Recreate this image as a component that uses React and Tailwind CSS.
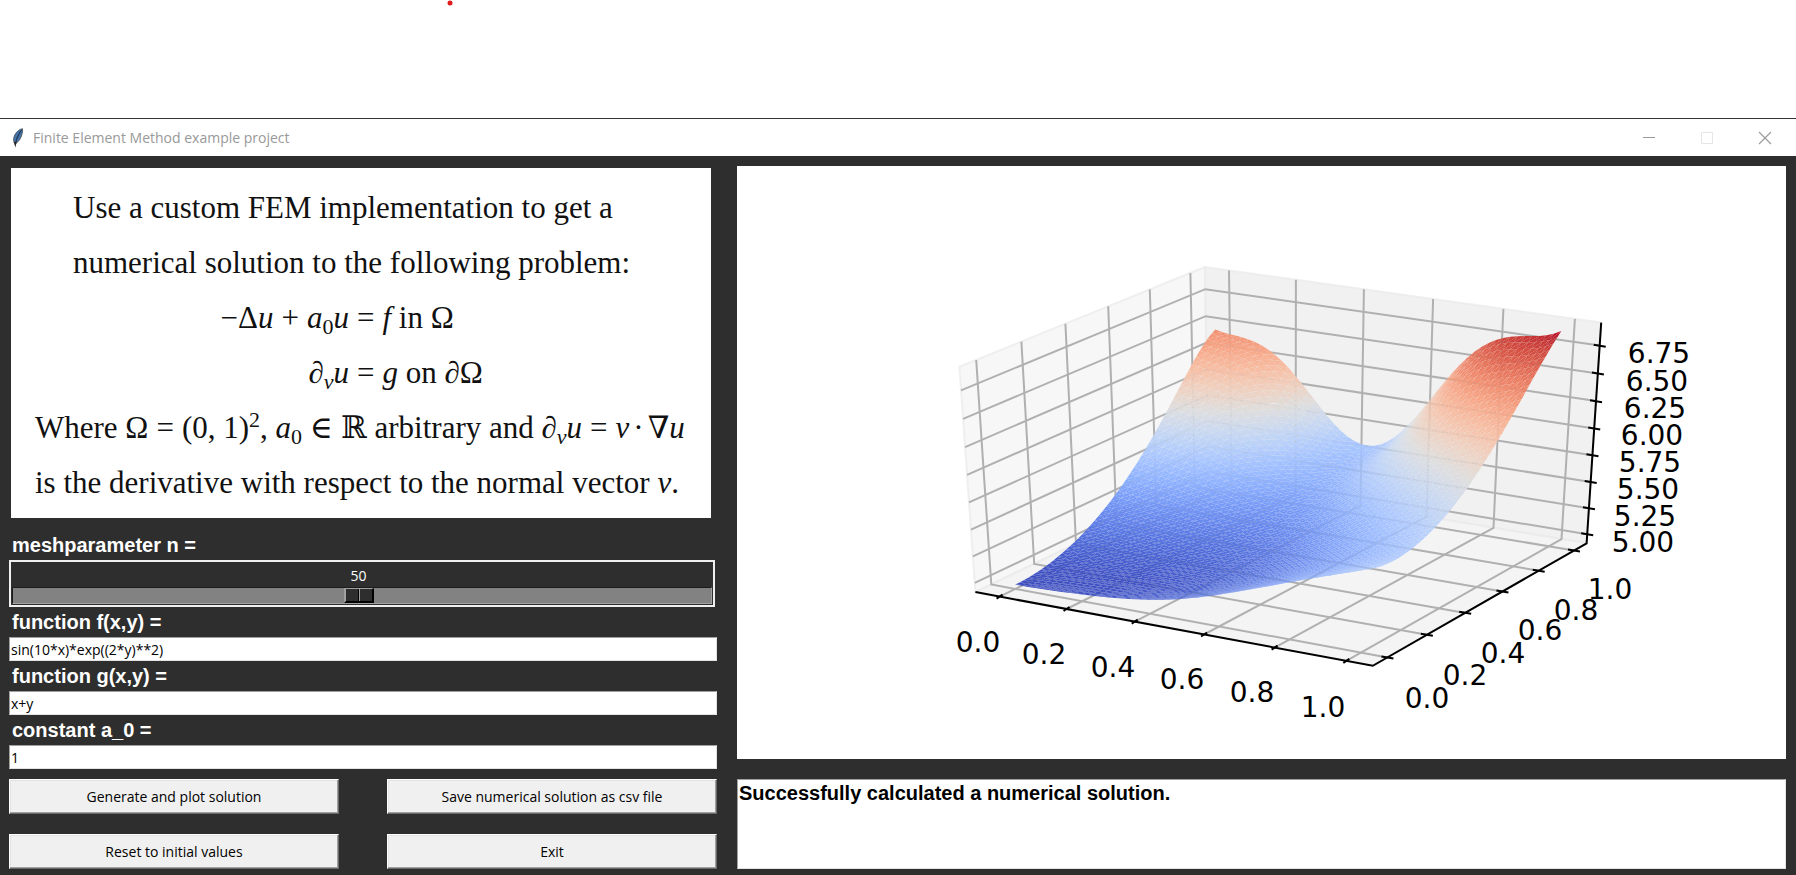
import React, { useMemo, useState } from "react";

/* ---------- finite difference solution of -Δu + a0·u = f, ∂νu = g ---------- */

const N = 50;
const M = N + 1;

function solve() {
  const h = 1 / N;
  const omega = 1.97;
  const u = new Float64Array(M * M).fill(5.5);
  for (let pass = 0; pass < 700; pass++) {
    for (let j = 0; j < M; j++) {
      for (let i = 0; i < M; i++) {
        const x = i * h;
        const y = j * h;
        const flux = 2 * h * (x + y);
        let s = h * h * Math.sin(10 * x) * Math.exp(4 * y * y);
        s += i > 0 ? u[j * M + i - 1] : u[j * M + 1] + flux;
        s += i < N ? u[j * M + i + 1] : u[j * M + N - 1] + flux;
        s += j > 0 ? u[(j - 1) * M + i] : u[M + i] + flux;
        s += j < N ? u[(j + 1) * M + i] : u[(N - 1) * M + i] + flux;
        const k = j * M + i;
        u[k] += omega * (s / (4 + h * h) - u[k]);
      }
    }
  }
  return u;
}

/* ---------- camera ---------- */

const CAM = [
  328.154603, 241.669837, -13.458977, 271.141199,
  44.556083, -77.862247, -117.960797, 305.866744,
  -0.04268, 0.070156, -0.024331,
];

function project(x, y, zData) {
  const z = zData - 6;
  const w = CAM[8] * x + CAM[9] * y + CAM[10] * z + 1;
  return [
    (CAM[0] * x + CAM[1] * y + CAM[2] * z + CAM[3]) / w,
    (CAM[4] * x + CAM[5] * y + CAM[6] * z + CAM[7]) / w,
  ];
}

const LO = -0.0729;
const HI = 1.0729;
const ZLO = 4.913;
const ZHI = 6.954;

const toPoints = (list) =>
  list.map((p) => project(...p).map((v) => v.toFixed(1)).join(",")).join(" ");

/* ---------- coolwarm colour map ---------- */

const COOLWARM = [
  [59, 76, 192], [68, 90, 204], [77, 104, 215], [87, 117, 225], [98, 130, 234],
  [108, 142, 241], [119, 154, 247], [130, 165, 251], [141, 176, 254], [152, 185, 255],
  [163, 194, 255], [174, 201, 253], [184, 208, 249], [194, 213, 244], [204, 217, 238],
  [213, 219, 230], [221, 221, 221], [229, 216, 209], [236, 211, 197], [241, 204, 185],
  [245, 196, 173], [247, 187, 160], [247, 177, 148], [247, 166, 135], [244, 154, 123],
  [241, 141, 111], [236, 127, 99], [229, 112, 88], [222, 96, 77], [213, 80, 66],
  [203, 62, 56], [192, 40, 47], [180, 4, 38],
];

function colour(t) {
  const p = Math.min(Math.max(t, 0), 1) * 32;
  const k = Math.min(Math.floor(p), 31);
  const [a, b] = [COOLWARM[k], COOLWARM[k + 1]];
  return `rgb(${a.map((v, i) => Math.round(v + (b[i] - v) * (p - k))).join(",")})`;
}

function buildTriangles() {
  const u = solve();
  const min = Math.min(...u);
  const max = Math.max(...u);
  const at = (i, j) => [i / N, j / N, u[j * M + i]];
  const out = [];
  const push = (...tri) => {
    const mean = (tri[0][2] + tri[1][2] + tri[2][2]) / 3;
    out.push({ points: toPoints(tri), fill: colour((mean - min) / (max - min)) });
  };
  for (let j = N - 1; j >= 0; j--) {
    for (let i = 0; i < N; i++) {
      push(at(i, j), at(i, j + 1), at(i + 1, j + 1));
      push(at(i, j), at(i + 1, j), at(i + 1, j + 1));
    }
  }
  return out;
}

const UNIT = [0, 0.2, 0.4, 0.6, 0.8, 1];
const ZTICKS = [5, 5.25, 5.5, 5.75, 6, 6.25, 6.5, 6.75];

const LABELS = [
  ["0.0", 241, 486], ["0.2", 307, 498], ["0.4", 376, 511],
  ["0.6", 445, 523], ["0.8", 515, 536], ["1.0", 586, 551],
  ["0.0", 690, 542], ["0.2", 728, 519], ["0.4", 766, 497],
  ["0.6", 803, 474], ["0.8", 839, 454], ["1.0", 873, 433],
  ["5.00", 906, 386], ["5.25", 908, 360], ["5.50", 911, 333], ["5.75", 913, 306],
  ["6.00", 915, 279], ["6.25", 918, 252], ["6.50", 920, 225], ["6.75", 922, 197],
];

function SurfacePlot() {
  const triangles = useMemo(buildTriangles, []);
  const ticks = [
    ...UNIT.map((t) => [project(t, LO, ZLO), 3, -2]),
    ...UNIT.map((t) => [project(HI, t, ZLO), 6, 1]),
    ...ZTICKS.map((t) => [project(HI, HI, t), 6, 1]),
  ];
  return (
    <svg viewBox="0 0 1049 593" className="block h-auto w-full bg-white" role="img" aria-label="Surface plot of the numerical solution">
      <g stroke="#e9e9e9" strokeWidth="2" strokeOpacity="0.7" strokeLinejoin="round">
        <polygon fill="#f7f7f7" points={toPoints([[LO, LO, ZLO], [LO, HI, ZLO], [LO, HI, ZHI], [LO, LO, ZHI]])} />
        <polygon fill="#f1f1f1" points={toPoints([[LO, HI, ZLO], [HI, HI, ZLO], [HI, HI, ZHI], [LO, HI, ZHI]])} />
        <polygon fill="#f4f4f4" points={toPoints([[LO, LO, ZLO], [HI, LO, ZLO], [HI, HI, ZLO], [LO, HI, ZLO]])} />
      </g>
      <g fill="none" stroke="#b0b0b0" strokeWidth="2">
        {UNIT.map((t) => (
          <polyline key={`x${t}`} points={toPoints([[t, LO, ZLO], [t, HI, ZLO], [t, HI, ZHI]])} />
        ))}
        {UNIT.map((t) => (
          <polyline key={`y${t}`} points={toPoints([[HI, t, ZLO], [LO, t, ZLO], [LO, t, ZHI]])} />
        ))}
        {ZTICKS.map((t) => (
          <polyline key={`z${t}`} points={toPoints([[LO, LO, t], [LO, HI, t], [HI, HI, t]])} />
        ))}
      </g>
      <g fill="none" stroke="#000" strokeWidth="2">
        <polyline points={toPoints([[LO, LO, ZLO], [HI, LO, ZLO], [HI, HI, ZLO], [HI, HI, ZHI]])} />
        {ticks.map(([[x, y], dx, dy], i) => (
          <line key={i} x1={x - dx} y1={y - dy} x2={x + dx} y2={y + dy} />
        ))}
      </g>
      <g>
        {triangles.map((t, i) => (
          <polygon key={i} points={t.points} fill={t.fill} />
        ))}
      </g>
      <g className="font-['DejaVu_Sans',sans-serif] text-[28px]" textAnchor="middle">
        {LABELS.map(([text, x, y]) => (
          <text key={`${text}-${x}`} x={x} y={y}>{text}</text>
        ))}
      </g>
    </svg>
  );
}

/* ---------- window chrome ---------- */

function FeatherIcon() {
  return (
    <svg width="14" height="20" viewBox="0 0 14 20" aria-hidden="true">
      <path d="M11.500 .8C11.800 3 11.300 6 10 9c-1 2.400-2.600 4.600-4.200 5.600l-2.600.2C2.200 12.400 2.500 9.500 4 6.600 5.800 3.400 8.800 1 11.500.8z" fill="#4373ad" stroke="#4a4f57" strokeWidth="0.900" />
      <path d="M10.500 2.200C8 5.600 5.500 10 4.600 15" fill="none" stroke="#1c2733" strokeWidth="1" />
      <path d="M2.800 14l3.200.4-1 2-.5 3.200-1-3.200z" fill="#222" />
    </svg>
  );
}

function TitleBar() {
  const button = "flex h-9 w-[58px] items-center justify-center";
  return (
    <header className="flex h-[38px] items-center border-t border-[#333333] bg-white pl-[11px] pr-0.5">
      <FeatherIcon />
      <h1 className="ml-2 flex-1 text-sm text-[#999999]">Finite Element Method example project</h1>
      <button type="button" aria-label="Minimize" className={button}>
        <svg width="14" height="14" viewBox="0 0 14 14"><path d="M1 6.500h12" stroke="#999" /></svg>
      </button>
      <button type="button" aria-label="Maximize" className={button}>
        <svg width="14" height="14" viewBox="0 0 14 14"><path d="M1.500 1.500h11v11h-11z" fill="none" stroke="#e6e6e6" /></svg>
      </button>
      <button type="button" aria-label="Close" className={button}>
        <svg width="14" height="14" viewBox="0 0 14 14"><path d="M1 1l12 12M13 1L1 13" stroke="#999" strokeWidth="1.100" /></svg>
      </button>
    </header>
  );
}

/* ---------- problem statement ---------- */

const V = ({ children }) => <i>{children}</i>;
const Sub = ({ children }) => <sub className="text-[22px]">{children}</sub>;
const Rel = ({ children }) => <span className="mx-2">{children}</span>;
const NormalDerivative = () => (
  <><V>∂</V><Sub><V>ν</V></Sub><V>u</V></>
);

function Problem() {
  return (
    <section className="ml-0.5 mr-1.5 mt-0.5 overflow-hidden bg-white pb-2 pl-6 pt-3 font-['Liberation_Serif','DejaVu_Serif',serif] text-[31px] leading-[55px] whitespace-nowrap text-[#111111]">
      <p className="pl-[38px]">Use a custom FEM implementation to get a</p>
      <p className="pl-[38px]">numerical solution to the following problem:</p>
      <div className="grid grid-cols-[314px_1fr]">
        <span className="text-right">−Δ<V>u</V><Rel>+</Rel><V>a</V><Sub>0</Sub><V>u</V></span>
        <span><Rel>=</Rel><V>f</V> in Ω</span>
        <span className="text-right"><NormalDerivative /></span>
        <span><Rel>=</Rel><V>g</V> on <V>∂</V>Ω</span>
      </div>
      <p>
        Where Ω<Rel>=</Rel>(0, 1)<sup className="text-[22px]">2</sup>, <V>a</V><Sub>0</Sub>
        <Rel>∈</Rel>ℝ arbitrary and <NormalDerivative /><Rel>=</Rel><V>ν</V><span className="mx-1">·</span>∇<V>u</V>
      </p>
      <p>is the derivative with respect to the normal vector <V>ν</V>.</p>
    </section>
  );
}

/* ---------- controls ---------- */

const labelStyle = "block pl-[3px] font-['Liberation_Sans',Arial,sans-serif] text-xl leading-[30px] font-bold text-white";

function MeshSlider({ value, onChange }) {
  const offset = `calc((100% - 30px) * ${(value - 1) / 99})`;
  return (
    <>
      <label htmlFor="mesh" className={`${labelStyle} mt-3`}>meshparameter n =</label>
      <div className="mr-0.5 h-[47px] border-2 border-[#f0f0f0] px-px pb-px">
        <output htmlFor="mesh" className="block h-[25px] w-[30px] text-center text-sm leading-[27px] text-white" style={{ marginLeft: offset }}>{value}</output>
        <input
          id="mesh"
          type="range"
          min="1"
          max="100"
          value={value}
          onChange={(e) => onChange(Number(e.target.value))}
          className="block h-[17px] w-full appearance-none border border-t-[#1b1b1b] border-r-[#a0a0a0] border-b-[#a0a0a0] border-l-[#1b1b1b] bg-[#828282] [&::-webkit-slider-thumb]:h-[15px] [&::-webkit-slider-thumb]:w-[30px] [&::-webkit-slider-thumb]:appearance-none [&::-webkit-slider-thumb]:border-t [&::-webkit-slider-thumb]:border-r-2 [&::-webkit-slider-thumb]:border-b-2 [&::-webkit-slider-thumb]:border-l-2 [&::-webkit-slider-thumb]:border-t-[#a0a0a0] [&::-webkit-slider-thumb]:border-r-black [&::-webkit-slider-thumb]:border-b-black [&::-webkit-slider-thumb]:border-l-[#a0a0a0] [&::-webkit-slider-thumb]:bg-[linear-gradient(90deg,#2e2e2e_12px,#000_12px,#000_13px,#a0a0a0_13px,#a0a0a0_14px,#2e2e2e_14px)]"
        />
      </div>
    </>
  );
}

function Field({ id, label, value, onChange }) {
  return (
    <>
      <label htmlFor={id} className={labelStyle}>{label}</label>
      <input
        id={id}
        type="text"
        value={value}
        onChange={(e) => onChange(e.target.value)}
        className="block h-6 w-full border border-t-[#a0a0a0] border-r-[#e3e3e3] border-b-[#e3e3e3] border-l-[#a0a0a0] bg-white px-px text-sm text-black outline-none"
      />
    </>
  );
}

function Action({ children, onClick }) {
  return (
    <button
      type="button"
      onClick={onClick}
      className="h-[35px] border border-t-white border-r-[#696969] border-b-[#696969] border-l-white bg-[#f0f0f0] text-sm text-black shadow-[inset_-1px_-1px_0_#a0a0a0,inset_1px_1px_0_#e3e3e3]"
    >
      {children}
    </button>
  );
}

const INITIAL = { n: 50, f: "sin(10*x)*exp((2*y)**2)", g: "x+y", a0: "1" };

export default function App() {
  const [form, setForm] = useState(INITIAL);
  const set = (key) => (value) => setForm({ ...form, [key]: value });

  return (
    <div className="flex min-h-screen flex-col bg-white font-['Open_Sans','Noto_Sans',sans-serif]">
      <div className="h-[118px] pl-[447px]">
        <svg width="6" height="6" viewBox="0 0 6 6" aria-hidden="true"><circle cx="3" cy="3" r="2.500" fill="#e11b1b" /></svg>
      </div>
      <TitleBar />
      <main className="grid flex-1 grid-cols-[708fr_1049fr] items-start gap-x-5 bg-[#2e2e2e] pt-2.5 pr-2.5 pb-1.5 pl-[9px]">
        <div className="min-w-0">
          <Problem />
          <MeshSlider value={form.n} onChange={set("n")} />
          <Field id="f" label="function f(x,y) =" value={form.f} onChange={set("f")} />
          <Field id="g" label="function g(x,y) =" value={form.g} onChange={set("g")} />
          <Field id="a0" label="constant a_0 =" value={form.a0} onChange={set("a0")} />
          <div className="mt-2.5 grid grid-cols-2 gap-x-12 gap-y-5">
            <Action>Generate and plot solution</Action>
            <Action>Save numerical solution as csv file</Action>
            <Action onClick={() => setForm(INITIAL)}>Reset to initial values</Action>
            <Action>Exit</Action>
          </div>
        </div>
        <div className="flex min-w-0 flex-col gap-5 self-stretch">
          <SurfacePlot />
          <textarea
            aria-label="Status"
            readOnly
            value="Successfully calculated a numerical solution."
            className="block min-h-[90px] w-full flex-1 resize-none border border-t-[#a0a0a0] border-r-[#e3e3e3] border-b-[#e3e3e3] border-l-[#a0a0a0] bg-white px-px pt-px font-['Liberation_Sans',Arial,sans-serif] text-xl leading-6 font-bold text-black outline-none"
          />
        </div>
      </main>
    </div>
  );
}
